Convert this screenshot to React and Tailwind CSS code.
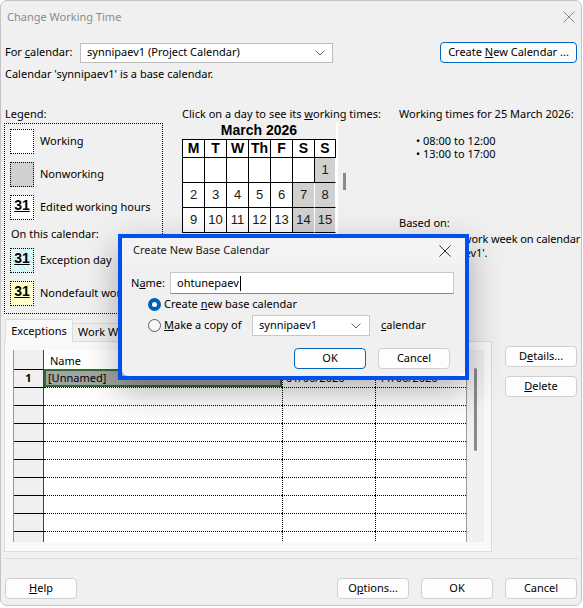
import React from 'react';

const ui = "font-['Noto_Sans',sans-serif]";
const arial = "font-['Liberation_Sans',Arial,sans-serif]";

function Chevron() {
  return (
    <svg width="10" height="6" viewBox="0 0 10 6" className="shrink-0">
      <path d="M0.5 0.5 L5 5 L9.5 0.5" fill="none" stroke="#5f5f5f" strokeWidth="1" />
    </svg>
  );
}

function CloseX({ color = '#5c5c5c' }) {
  return (
    <svg width="12" height="12" viewBox="0 0 12 12">
      <path d="M0.5 0.5 L11.5 11.5 M11.5 0.5 L0.5 11.5" stroke={color} strokeWidth="1" />
    </svg>
  );
}

function Button({ children, className = '', focused = false }) {
  return (
    <div
      className={`flex h-[21px] items-center justify-center rounded-[4px] border bg-[#fdfdfd] text-[11px] text-black ${
        focused ? 'border-[#0067c0]' : 'border-[#d0d0d0]'
      } ${className}`}
    >
      <span className="whitespace-pre">{children}</span>
    </div>
  );
}

function Swatch({ className = '', num = false, children }) {
  return (
    <div className="flex h-[25px] items-center">
      <div className={`flex h-[25px] w-[24px] shrink-0 justify-center border border-dotted border-black ${className}`}>
        {num ? <span className={`${arial} mt-[1px] text-[14px] font-bold leading-[16px] underline`}>31</span> : null}
      </div>
      <span className="ml-[6px] whitespace-nowrap text-[11px]">{children}</span>
    </div>
  );
}

// Only the first three weeks show above the dialog; the rest sit under it.
const weeks = [
  [null, null, null, null, null, null, 1],
  [2, 3, 4, 5, 6, 7, 8],
  [9, 10, 11, 12, 13, 14, 15],
];

function Calendar() {
  const heads = ['M', 'T', 'W', 'Th', 'F', 'S', 'S'];
  return (
    <div className={`${arial} w-[154px]`}>
      <div className="h-[17px] text-center text-[14px] font-bold leading-[17px]">March 2026</div>
      <div className="grid grid-cols-[22px_22px_22px_22px_22px_22px_21px] border-l border-t border-black">
        {heads.map((h, i) => (
          <div
            key={i}
            className="flex h-[18px] items-center justify-center border-b border-r border-black bg-white text-[14px] font-bold"
          >
            {h}
          </div>
        ))}
        {weeks.flat().map((d, i) => {
          const weekend = i % 7 >= 5 && d !== null;
          return (
            <div
              key={i}
              className={`flex h-[25px] items-center justify-center border-b border-r text-[13px] text-[#1a1a1a] ${
                weekend ? 'border-b-black border-r-white bg-[#d0d0d0]' : 'border-black bg-white'
              }`}
            >
              {d}
            </div>
          );
        })}
      </div>
    </div>
  );
}

function Grid() {
  const rows = Array.from({ length: 10 });
  return (
    <div className="flex">
      <div className="w-[454px] border-l border-r border-[#9a9a9a] bg-white">
        <div className="flex h-[19px]">
          <div className="w-[30px] border-r border-[#404040] bg-[#f0f0f0]" />
          <div className="flex w-[238px] items-end pl-[6px] text-[11px] leading-[16px]">Name</div>
          <div className="w-[93px]" />
          <div className="flex-1" />
        </div>
        {rows.map((_, i) => (
          <div key={i} className="flex h-[18px]">
            <div className="flex w-[30px] items-center justify-center border-r border-t border-r-[#404040] border-t-black bg-[#f0f0f0] text-[11px] font-bold">
              {i === 0 ? '1' : ''}
            </div>
            {i === 0 ? (
              <div className="flex w-[238px] items-center border-2 border-[#2f6a2f] bg-[#a3a3a3] pl-[2px] text-[11px]">
                [Unnamed]
              </div>
            ) : (
              <div className="w-[238px] border-t border-dotted border-black" />
            )}
            <div
              className={`flex w-[93px] items-center border-l border-dotted border-black pl-[3px] text-[11px] ${
                i === 0 ? '' : 'border-t'
              }`}
            >
              {i === 0 ? '01/06/2026' : ''}
            </div>
            <div
              className={`flex flex-1 items-center border-l border-dotted border-black pl-[3px] text-[11px] ${
                i === 0 ? '' : 'border-t'
              }`}
            >
              {i === 0 ? '11/06/2026' : ''}
            </div>
          </div>
        ))}
      </div>
      <div className="flex w-[17px] justify-center bg-[#f0f0f0] pt-[18px]">
        <div className="h-[83px] w-[3px] rounded-full bg-[#8a8a8a]" />
      </div>
    </div>
  );
}

function NewCalendarDialog() {
  return (
    <div className="absolute left-[117px] top-[233px] h-[146px] w-[351px] border-[4px] border-[#0050ef] shadow-[0_12px_32px_rgba(0,0,0,0.3)]">
      <div className="h-full w-full rounded-b-[6px] bg-[#f0f0f0]">
        <div className="flex h-[25px] items-center justify-between bg-[#f3f3f3] pl-[11px] pr-[14px]">
          <span className="text-[11px] text-[#1a1a1a]">Create New Base Calendar</span>
          <CloseX color="#333" />
        </div>
        <div className="flex items-center pl-[9px] pt-[9px]">
          <span className="w-[39px] text-[11px]">
            N<u>a</u>me:
          </span>
          <div className="flex h-[22px] w-[284px] items-center border border-[#c8c8c8] border-b-[#8a8a8a] bg-white pl-[6px] text-[11px]">
            ohtunepaev<span className="ml-[1px] h-[15px] w-[1px] bg-black" />
          </div>
        </div>
        <div className="ml-[26px] mt-[2px] flex h-[17px] items-center">
          <div className="flex h-[13px] w-[13px] items-center justify-center rounded-full bg-[#005fb8]">
            <div className="h-[5px] w-[5px] rounded-full bg-white" />
          </div>
          <span className="ml-[3px] text-[11px]">
            Create <u>n</u>ew base calendar
          </span>
        </div>
        <div className="ml-[26px] mt-[2px] flex h-[21px] items-center">
          <div className="h-[13px] w-[13px] rounded-full border border-[#5a5a5a] bg-[#f7f7f7]" />
          <span className="ml-[3px] w-[88px] text-[11px]">
            <u>M</u>ake a copy of
          </span>
          <div className="flex h-[21px] w-[118px] items-center justify-between border border-[#c8c8c8] bg-white pl-[6px] pr-[8px] text-[11px]">
            synnipaev1
            <Chevron />
          </div>
          <span className="ml-[11px] text-[11px]">
            <u>c</u>alendar
          </span>
        </div>
        <div className="mr-[15px] mt-[12px] flex justify-end gap-[12px]">
          <Button focused className="w-[72px]">
            OK
          </Button>
          <Button className="w-[72px]">Cancel</Button>
        </div>
      </div>
    </div>
  );
}

export default function App() {
  return (
    <div className={`${ui} relative h-[608px] w-[583px] overflow-hidden bg-white text-black`}>
      <div className="relative h-[606px] w-[582px] overflow-hidden rounded-[7px] border border-[#c4c4c4] bg-[#f0f0f0]">
        <div className="flex h-[32px] items-center justify-between pl-[6px] pr-[6px]">
          <span className="text-[11px] text-[#8c8c8c]">Change Working Time</span>
          <CloseX color="#8c8c8c" />
        </div>

        <div className="mt-[9px] flex h-[21px] items-center pl-[4px] pr-[4px]">
          <span className="w-[75px] text-[11px]">
            For <u>c</u>alendar:
          </span>
          <div className="flex h-[20px] w-[253px] items-center justify-between border border-[#bdbdbd] bg-white pl-[6px] pr-[7px] text-[11px]">
            synnipaev1 (Project Calendar)
            <Chevron />
          </div>
          <div className="flex-1" />
          <Button focused className="w-[137px]">
            Create <u>N</u>ew Calendar ...
          </Button>
        </div>
        <div className="mt-[3px] h-[16px] pl-[4px] text-[11px] leading-[16px]">Calendar 'synnipaev1' is a base calendar.</div>

        <div className="mt-[24px] flex h-[212px]">
          <div className="ml-[3px] w-[159px]">
            <div className="h-[16px] pl-[1px] text-[11px] leading-[16px]">Legend:</div>
            <div className="mt-[1px] flex h-[191px] flex-col gap-[8px] border border-dotted border-black px-[5px] pt-[5px]">
              <Swatch className="bg-white">Working</Swatch>
              <Swatch className="bg-[#d0d0d0]">Nonworking</Swatch>
              <Swatch num className="bg-white">
                Edited working hours
              </Swatch>
              <div className="-mb-[2px] -mt-[2px] h-[16px] pl-[1px] text-[11px] leading-[16px]">On this calendar:</div>
              <Swatch
                num
                className="bg-[repeating-linear-gradient(45deg,#b9eeee_0px,#b9eeee_1px,#e9fcfc_1px,#e9fcfc_3px)]"
              >
                Exception day
              </Swatch>
              <Swatch num className="bg-[#ffffcc]">
                Nondefault work week
              </Swatch>
            </div>
          </div>

          <div className="ml-[19px] w-[217px]">
            <div className="h-[16px] whitespace-nowrap text-[11px] leading-[16px]">
              Click on a day to see its <u>w</u>orking times:
            </div>
            <div className="flex h-[112px]">
              <div className="border-r-2 border-white">
                <Calendar />
              </div>
              <div className="ml-[5px] mt-[51px] h-[17px] w-[3px] bg-[#8a8a8a]" />
            </div>
          </div>

          <div className="w-[180px] text-[11px]">
            <div className="h-[16px] whitespace-nowrap leading-[16px]">Working times for 25 March 2026:</div>
            <div className="ml-[17px] mt-[12px] leading-[13px]">
              <div>• 08:00 to 12:00</div>
              <div>• 13:00 to 17:00</div>
            </div>
            <div className="mt-[56px] leading-[14px]">Based on:</div>
            <div className="ml-[17px] mt-[2px] flex w-[176px] leading-[14px] tracking-[-0.1px]">
              <span className="w-[7px] shrink-0">•</span>
              <span>
                Default work week on calendar
                <br />
                'synnipaev1'.
              </span>
            </div>
          </div>
        </div>

        <div className="mt-[1px] flex">
          <div className="ml-[3px] w-[488px]">
            <div className="flex h-[22px] items-end">
              <div className="relative z-10 -mb-[1px] ml-[1px] flex h-[23px] w-[68px] items-center justify-center border border-b-0 border-[#dcdcdc] bg-[#f9f9f9] text-[11px]">
                Exceptions
              </div>
              <div className="flex h-[18px] w-[80px] items-center border border-b-0 border-l-0 border-[#dcdcdc] bg-[#f0f0f0] pl-[5px] text-[11px]">
                Work Weeks
              </div>
            </div>
            <div className="h-[211px] border border-[#dcdcdc] bg-[#f9f9f9] pl-[8px] pt-[8px]">
              <div className="h-[192px] overflow-hidden">
                <Grid />
              </div>
            </div>
          </div>
          <div className="ml-[13px] mt-[27px] flex flex-col gap-[9px]">
            <Button className="w-[72px]">
              D<u>e</u>tails...
            </Button>
            <Button className="w-[72px]">
              <u>D</u>elete
            </Button>
          </div>
        </div>

        <div className="mx-[3px] mt-[6px] border-t border-[#d9d9d9]" />

        <div className="mt-[19px] flex px-[4px]">
          <Button className="w-[72px]">
            <u>H</u>elp
          </Button>
          <div className="flex-1" />
          <Button className="w-[72px]">
            O<u>p</u>tions...
          </Button>
          <Button className="ml-[12px] w-[72px]">OK</Button>
          <Button className="ml-[12px] w-[72px]">Cancel</Button>
        </div>

        <NewCalendarDialog />
      </div>
    </div>
  );
}
